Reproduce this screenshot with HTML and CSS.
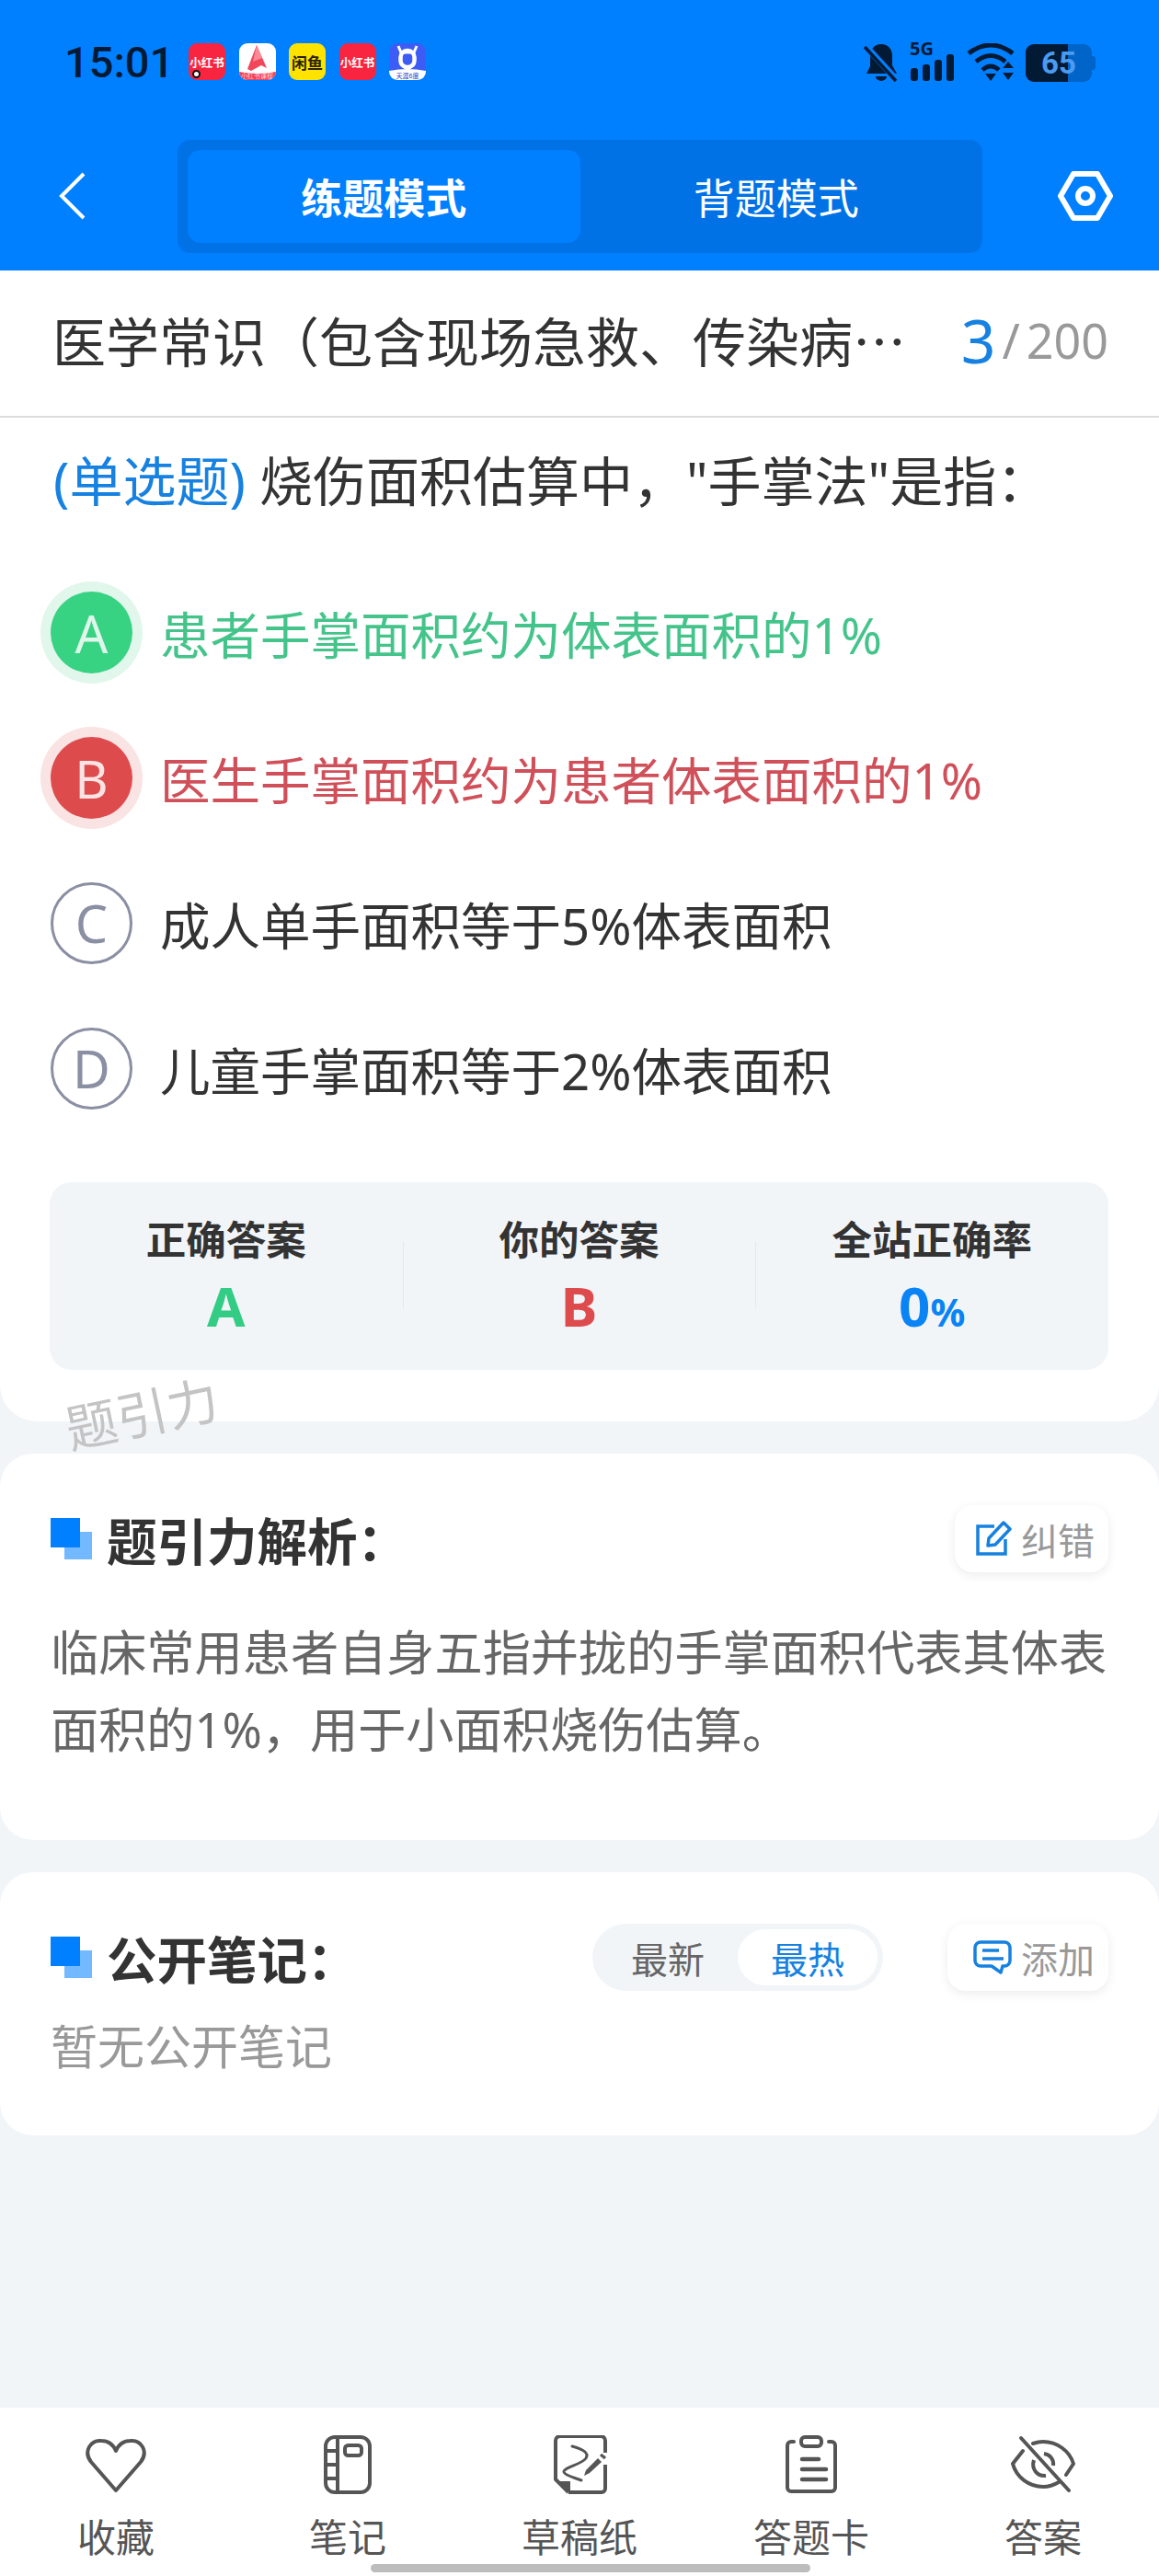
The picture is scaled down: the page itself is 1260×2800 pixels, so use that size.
FILE: index.html
```html
<!DOCTYPE html>
<html lang="zh-CN">

<head>
    <meta charset="UTF-8">
    <meta name="viewport" content="width=device-width, initial-scale=1.0">
    <title>练题模式</title>
    <link rel="stylesheet" href="styles.css">
</head>

<body>
    <div class="page">
        <header class="header">
            <div class="status-bar">
                <span class="time">15:01</span>
                <div class="app-icons">
                    <span class="app app-red">小红书<i class="app-dot"></i></span>
                    <span class="app app-white">
                        <svg viewBox="0 0 40 40" width="40" height="40">
                            <path d="M19 2 L30 27 L24 24 L13 30 L9 28Z" fill="#f2465a" />
                            <path d="M19 2 L25 16 L15 20Z" fill="#fb8a96" />
                            <path d="M0 31 Q20 35 40 31 V33 a7 7 0 0 1-7 7 H7 a7 7 0 0 1-7-7Z" fill="#f0405a" />
                        </svg>
                        <span class="app-caption light">小红书课程</span>
                    </span>
                    <span class="app app-yellow">闲鱼</span>
                    <span class="app app-red">小红书</span>
                    <span class="app app-blue">
                        <svg viewBox="0 0 40 40" width="40" height="40">
                            <path d="M10 3 L13 10 H27 L30 3" fill="none" stroke="#fff" stroke-width="3" />
                            <rect x="12.500" y="8" width="15" height="18" rx="7" fill="none" stroke="#fff" stroke-width="4.500" />
                            <path d="M0 30 Q20 26 40 30 V33 a7 7 0 0 1-7 7 H7 a7 7 0 0 1-7-7Z" fill="#fff" />
                        </svg>
                        <span class="app-caption dark">天涯6度</span>
                    </span>
                </div>
                <div class="status-right">
                    <svg class="ico-bell" viewBox="0 0 38 42" width="38" height="42">
                        <path d="M19 1c8 0 12 6 12 13v10l5 9H3l4-8V14C7 7 11 1 19 1Z" fill="#031a35" />
                        <path d="M13 36h12a6 5 0 0 1-12 0Z" fill="#031a35" />
                        <path d="M2 3 L36 40" stroke="#0080ff" stroke-width="7" />
                        <path d="M1 4 L35 41" stroke="#031a35" stroke-width="3.500" />
                    </svg>
                    <div class="signal">
                        <span class="signal-label">5G</span>
                        <svg viewBox="0 0 50 30" width="50" height="30">
                            <rect x="1" y="15" width="8" height="14" rx="3" fill="#031a35" />
                            <rect x="14" y="11" width="8" height="18" rx="3" fill="#031a35" />
                            <rect x="27" y="6" width="8" height="23" rx="3" fill="#031a35" />
                            <rect x="40" y="0" width="8" height="29" rx="3" fill="#031a35" />
                        </svg>
                    </div>
                    <svg class="ico-wifi" viewBox="0 0 52 42" width="52" height="42">
                        <path d="M2 11 Q26 -7 50 11" fill="none" stroke="#031a35" stroke-width="5" />
                        <path d="M10 20 Q26 7 42 20" fill="none" stroke="#031a35" stroke-width="5" />
                        <path d="M17 29 Q26 21 35 29" fill="none" stroke="#031a35" stroke-width="5" />
                        <path d="M20 33H32L26 41Z" fill="#031a35" />
                        <path d="M39 27H51L45 20ZM39 32H51L45 40Z" fill="#031a35" />
                    </svg>
                    <div class="battery"><span class="battery-level"></span><span class="battery-num">65</span></div>
                </div>
            </div>
            <div class="toolbar">
                <svg class="ico-back" viewBox="0 0 30 52" width="30" height="52">
                    <path d="M27 2 L3 26 L27 50" fill="none" stroke="#fff" stroke-width="4" />
                </svg>
                <div class="mode-tabs">
                    <div class="mode-tab active">练题模式</div>
                    <div class="mode-tab">背题模式</div>
                </div>
                <svg class="ico-settings" viewBox="0 0 60 54" width="60" height="54">
                    <path d="M17 3 H43 L57 27 L43 51 H17 L3 27Z" fill="none" stroke="#fff" stroke-width="6" stroke-linejoin="round" />
                    <circle cx="30" cy="27" r="8" fill="none" stroke="#fff" stroke-width="6" />
                </svg>
            </div>
        </header>

        <main class="main">
            <section class="question-card">
                <div class="title-row">
                    <div class="title-text">医学常识（包含现场急救、传染病…</div>
                    <div class="progress"><span class="progress-now">3</span><span class="progress-sep">/</span><span class="progress-total">200</span></div>
                </div>
                <div class="question-text"><span class="question-type">(单选题)</span> 烧伤面积估算中，"手掌法"是指：</div>
                <div class="options">
                    <div class="option correct"><span class="option-mark">A</span><span>患者手掌面积约为体表面积的1%</span></div>
                    <div class="option wrong"><span class="option-mark">B</span><span>医生手掌面积约为患者体表面积的1%</span></div>
                    <div class="option"><span class="option-mark">C</span><span>成人单手面积等于5%体表面积</span></div>
                    <div class="option"><span class="option-mark">D</span><span>儿童手掌面积等于2%体表面积</span></div>
                </div>
                <div class="stats">
                    <div class="stat">
                        <div class="stat-label">正确答案</div>
                        <div class="stat-value green">A</div>
                    </div>
                    <div class="stat">
                        <div class="stat-label">你的答案</div>
                        <div class="stat-value red">B</div>
                    </div>
                    <div class="stat">
                        <div class="stat-label">全站正确率</div>
                        <div class="stat-value blue">0<small>%</small></div>
                    </div>
                </div>
                <div class="watermark">题引力</div>
            </section>

            <section class="card analysis-card">
                <div class="card-head">
                    <div class="card-title"><i class="title-mark"></i>题引力解析：</div>
                    <div class="small-btn btn-fix">
                        <svg viewBox="0 0 40 40" width="40" height="40">
                            <path d="M21 6 H3 V36 H33 V20" fill="none" stroke="#1681e0" stroke-width="3.500" />
                            <path d="M31 2 L38 9 L22 26 L14 27 L15 19Z" fill="none" stroke="#1681e0" stroke-width="3.500" stroke-linejoin="round" />
                        </svg>
                        纠错
                    </div>
                </div>
                <p class="analysis-text">临床常用患者自身五指并拢的手掌面积代表其体表面积的1%，用于小面积烧伤估算。</p>
            </section>

            <section class="card notes-card">
                <div class="card-head">
                    <div class="card-title"><i class="title-mark"></i>公开笔记：</div>
                    <div class="notes-actions">
                        <div class="sort-pill">
                            <span class="sort-item">最新</span>
                            <span class="sort-item active">最热</span>
                        </div>
                        <div class="small-btn">
                            <svg viewBox="0 0 42 38" width="42" height="38">
                                <path d="M8 2 H34 a6 6 0 0 1 6 6 V22 a6 6 0 0 1-6 6 H32 L30 35 L20 28 H8 a6 6 0 0 1-6-6 V8 a6 6 0 0 1 6-6Z" fill="none" stroke="#1681e0" stroke-width="3.500" stroke-linejoin="round" />
                                <path d="M10 11 H28 M10 20 H33" stroke="#1681e0" stroke-width="3.500" />
                            </svg>
                            添加
                        </div>
                    </div>
                </div>
                <p class="notes-empty">暂无公开笔记</p>
            </section>
        </main>

        <nav class="bottom-nav">
            <div class="nav-item">
                <svg viewBox="0 0 70 64" width="70" height="64">
                    <path d="M35 60 L8 29 C-1 17 8 5 19 6 C27 6 32 10 35 17 C38 10 43 6 51 6 C62 5 71 17 62 29Z" fill="none" stroke="#555" stroke-width="4" stroke-linejoin="round" />
                </svg>
                <span>收藏</span>
            </div>
            <div class="nav-item">
                <svg viewBox="0 0 70 64" width="70" height="64">
                    <rect x="11" y="2" width="48" height="60" rx="10" fill="none" stroke="#555" stroke-width="4" />
                    <path d="M24 2 V62 M11 17 H24 M11 32 H24 M11 47 H24" stroke="#555" stroke-width="4" />
                    <rect x="32" y="11" width="18" height="11" rx="3.500" fill="none" stroke="#555" stroke-width="4" />
                </svg>
                <span>笔记</span>
            </div>
            <div class="nav-item">
                <svg viewBox="0 0 70 64" width="70" height="64">
                    <path d="M23 62 L9 48 V6 a5 5 0 0 1 5-5 H58 a5 5 0 0 1 5 5 V19 M63 32 V58 a4 4 0 0 1-4 4 H23" fill="none" stroke="#555" stroke-width="4" stroke-linejoin="round" />
                    <path d="M12 50 H25 V62Z" fill="#555" />
                    <path d="M27 12 C38 15 46 19 42 25 C37 32 17 35 18 40 C19 44 30 46 37 49" fill="none" stroke="#555" stroke-width="3" stroke-linecap="round" />
                    <path d="M40 44 L42 38 L55 25 L59 29 L46 41Z" fill="#555" />
                    <path d="M58 21 L63 25" stroke="#555" stroke-width="3.500" />
                </svg>
                <span>草稿纸</span>
            </div>
            <div class="nav-item">
                <svg viewBox="0 0 70 64" width="70" height="64">
                    <path d="M16 7 H13 a4 4 0 0 0-4 4 V57 a4 4 0 0 0 4 4 H57 a4 4 0 0 0 4-4 V11 a4 4 0 0 0-4-4 H54" fill="none" stroke="#555" stroke-width="4" stroke-linecap="round" />
                    <rect x="24" y="2" width="22" height="10" rx="4" fill="none" stroke="#555" stroke-width="4" />
                    <path d="M25 26 H43 M25 37 H51 M25 48 H51" stroke="#555" stroke-width="4.500" stroke-linecap="round" />
                </svg>
                <span>答题卡</span>
            </div>
            <div class="nav-item">
                <svg viewBox="0 0 70 64" width="70" height="64">
                    <path d="M13 17 L2 31 C6 46 20 56 35 56 C42 56 47 54 52 51 M24 9 C27 8 31 7 35 7 C50 7 64 17 68 31 L60 43" fill="none" stroke="#555" stroke-width="4" stroke-linecap="round" />
                    <path d="M36 20 C43 21 47 27 46 33 M25 27 C22 36 28 45 38 44" fill="none" stroke="#555" stroke-width="4" />
                    <path d="M11 3 L63 60" stroke="#555" stroke-width="4" stroke-linecap="round" />
                </svg>
                <span>答案</span>
            </div>
        </nav>
        <div class="home-bar"></div>
    </div>
</body>

</html>
```

FILE: styles.css
```css
* {
    box-sizing: border-box;
}

body {
    margin: 0;
    background: #f2f5f8;
    font-family: "Noto Sans", "Noto Sans CJK SC", sans-serif;
    color: #333;
}

.page {
    position: relative;
    width: 1260px;
    height: 2800px;
    display: flex;
    flex-direction: column;
    overflow: hidden;
}

/* Blue header */
.header {
    height: 294px;
    background: #0080ff;
    flex-shrink: 0;
}

.status-bar {
    height: 136px;
    padding: 47px 70px 0;
    display: flex;
    align-items: flex-start;
}

.time {
    font-family: Roboto, sans-serif;
    font-size: 47px;
    line-height: 42px;
    font-weight: 500;
    color: #031a35;
    width: 135px;
}

.app-icons {
    display: flex;
    gap: 14.500px;
}

.app {
    position: relative;
    width: 40px;
    height: 40px;
    border-radius: 9px;
    overflow: hidden;
    display: flex;
    align-items: center;
    justify-content: center;
    font-size: 12.500px;
    font-weight: 700;
    white-space: nowrap;
}

.app-red {
    background: #f9243f;
    color: #fff;
}

.app-white {
    background: #fff;
}

.app-yellow {
    background: #ffe300;
    color: #2b2300;
    font-size: 17px;
}

.app-blue {
    background: #3d5cf5;
}

.app-caption {
    position: absolute;
    left: 0;
    right: 0;
    bottom: 0;
    font-size: 7px;
    line-height: 9px;
    font-weight: 400;
    text-align: center;
}

.app-caption.light {
    color: #ffd5da;
}

.app-caption.dark {
    color: #2440c8;
}

.app-dot {
    position: absolute;
    left: 4px;
    bottom: 2px;
    width: 9px;
    height: 9px;
    border-radius: 50%;
    background: #fff;
    border: 2.500px solid #111;
}

.status-right {
    margin-left: auto;
    display: flex;
    align-items: flex-end;
    gap: 12px;
    height: 42px;
}

.signal {
    display: flex;
    flex-direction: column;
    width: 50px;
}

.signal-label {
    font-size: 20px;
    line-height: 13px;
    font-weight: 700;
    color: #031a35;
}

.battery {
    position: relative;
    width: 72px;
    height: 41px;
    margin-right: 3px;
    border-radius: 9px;
    background: #0064c8;
    text-align: center;
}

.battery::after {
    content: "";
    position: absolute;
    right: -4px;
    top: 13px;
    width: 4px;
    height: 15px;
    border-radius: 0 3px 3px 0;
    background: #0064c8;
}

.battery-level {
    position: absolute;
    left: 0;
    top: 0;
    bottom: 0;
    width: 46px;
    border-radius: 9px 0 0 9px;
    background: #031a35;
}

.battery-num {
    position: relative;
    font-family: Roboto, sans-serif;
    font-size: 33px;
    line-height: 41px;
    font-weight: 700;
    color: #4b9bf0;
}

.toolbar {
    padding: 16px 50px 0 64px;
    display: flex;
    align-items: flex-start;
}

.ico-back {
    margin-top: 35px;
}

.ico-settings {
    margin-top: 34px;
    margin-left: auto;
}

.mode-tabs {
    width: 875px;
    height: 123px;
    margin-left: 99px;
    padding: 11px;
    border-radius: 14px;
    background: #0072e6;
    display: flex;
}

.mode-tab {
    flex: 1;
    display: flex;
    align-items: center;
    justify-content: center;
    border-radius: 14px;
    color: #fff;
    font-size: 45px;
}

.mode-tab.active {
    background: #0080ff;
    font-weight: 700;
}

/* Main content */
.main {
    flex: 1;
}

.question-card {
    position: relative;
    height: 1251px;
    background: #fff;
    border-radius: 0 0 40px 40px;
}

.title-row {
    height: 160px;
    padding: 0 55px 8px 57px;
    border-bottom: 2px solid #dcdcdc;
    display: flex;
    align-items: center;
    justify-content: space-between;
}

.title-text {
    font-family: "Noto Sans CJK SC", sans-serif;
    font-size: 58px;
    color: #333;
    white-space: nowrap;
}

.progress {
    display: flex;
    align-items: center;
    color: #999;
    font-size: 52px;
}

.progress-now {
    color: #1681e0;
    font-size: 66px;
}

.progress-sep {
    margin: 0 7px;
}

.question-text {
    padding: 32px 58px 0;
    font-size: 58px;
    line-height: 74px;
}

.question-type {
    color: #1681e0;
}

.options {
    margin-top: 49px;
    padding: 0 55px;
}

.option {
    height: 157.800px;
    display: flex;
    align-items: center;
    gap: 30px;
    font-size: 54.500px;
    color: #333;
}

.option-mark {
    width: 89px;
    height: 89px;
    border-radius: 50%;
    border: 3px solid #8b8fa3;
    display: flex;
    align-items: center;
    justify-content: center;
    color: #8b8fa3;
    font-size: 56px;
    flex-shrink: 0;
}

.option.correct {
    color: #44c48a;
}

.option.correct .option-mark {
    border: 0;
    background: #38d283;
    color: #def7ea;
    box-shadow: 0 0 0 11px #e1f7ec;
}

.option.wrong {
    color: #d0505a;
}

.option.wrong .option-mark {
    border: 0;
    background: #dd4b4d;
    color: #fae3e3;
    box-shadow: 0 0 0 11px #fae3e3;
}

.stats {
    margin: 45px 55px 0 54px;
    height: 204px;
    border-radius: 24px;
    background: #f2f5f8;
    display: grid;
    grid-template-columns: 1fr 1fr 1fr;
    padding-top: 32px;
}

.stat {
    text-align: center;
    position: relative;
}

.stat + .stat::before {
    content: "";
    position: absolute;
    left: 0;
    top: 33px;
    height: 73px;
    border-left: 1px solid #e6e9ec;
}

.stat-label {
    font-size: 43.500px;
    line-height: 60px;
    font-weight: 700;
    color: #333;
}

.stat-value {
    font-size: 60px;
    line-height: 84px;
    font-weight: 700;
}

.stat-value small {
    font-size: 42px;
}

.green {
    color: #33cc85;
}

.red {
    color: #dd4b4d;
}

.blue {
    color: #0a84f5;
}

.watermark {
    position: absolute;
    left: 70px;
    top: 1207px;
    font-size: 56px;
    line-height: 70px;
    color: #c4c4c4;
    transform: rotate(-12deg);
}

.card {
    margin-top: 35px;
    padding: 56px 55px 0;
    background: #fff;
    border-radius: 36px;
}

.analysis-card {
    height: 420px;
}

.notes-card {
    height: 286px;
}

.card-head {
    height: 73px;
    display: flex;
    align-items: center;
    justify-content: space-between;
}

.card-title {
    display: flex;
    align-items: center;
    font-size: 54.500px;
    font-weight: 700;
    color: #333;
}

.title-mark {
    position: relative;
    display: block;
    width: 45px;
    height: 45px;
    margin-right: 16px;
    background: linear-gradient(#0080ff, #0080ff) 0 0 / 32px 32px no-repeat;
}

.title-mark::after {
    content: "";
    position: absolute;
    right: 0;
    bottom: 0;
    width: 30px;
    height: 30px;
    background: rgba(0, 128, 255, 0.55);
    z-index: 0;
}

.small-btn {
    height: 73px;
    padding: 0 15px 0 28px;
    border-radius: 20px;
    background: #fff;
    box-shadow: 0 3px 12px rgba(0, 0, 0, 0.08);
    display: flex;
    align-items: center;
    gap: 10px;
    font-size: 40px;
    color: #999;
}

.btn-fix {
    padding-left: 22px;
}

.analysis-text {
    margin: 45px 0 0;
    font-size: 52.200px;
    line-height: 84px;
    color: #666;
}

.notes-actions {
    display: flex;
    align-items: center;
    gap: 70px;
}

.sort-pill {
    height: 73px;
    padding: 6px;
    border-radius: 37px;
    background: #f2f5f8;
    display: flex;
    font-size: 40px;
    color: #666;
}

.sort-item {
    width: 152px;
    display: flex;
    align-items: center;
    justify-content: center;
    border-radius: 31px;
}

.sort-item.active {
    background: #fff;
    color: #1681e0;
}

.notes-empty {
    margin: 25px 0 0;
    font-size: 51px;
    line-height: 70px;
    color: #999;
}

/* Bottom nav */
.bottom-nav {
    height: 183px;
    flex-shrink: 0;
    padding-top: 30px;
    background: #fff;
    display: grid;
    grid-template-columns: repeat(5, 252px);
}

.nav-item {
    display: flex;
    flex-direction: column;
    align-items: center;
    font-size: 42px;
    line-height: 56px;
    color: #555;
}

.nav-item svg {
    margin-bottom: 19px;
}

.home-bar {
    position: absolute;
    left: 403px;
    bottom: 4px;
    width: 478px;
    height: 9px;
    border-radius: 5px;
    background: #bdbdbd;
}
```
